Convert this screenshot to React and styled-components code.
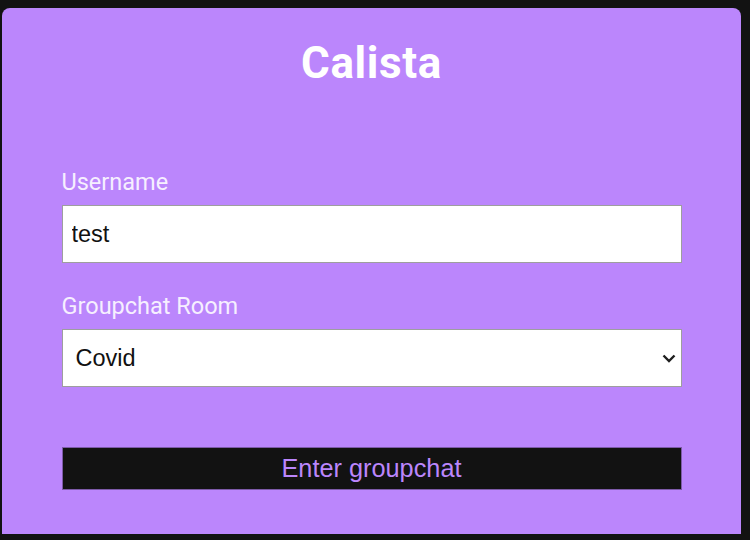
import * as React from "react";
import { useState } from "react";
import styled, { createGlobalStyle } from "styled-components";

const rooms = ["Covid", "JavaScript", "Python", "Gaming"];

const App = () => {
  const [username, setUsername] = useState("test");
  const [room, setRoom] = useState("Covid");

  return (
    <>
      <GlobalStyle />
      <Card>
        <Title>Calista</Title>
        <Form onSubmit={(e) => e.preventDefault()}>
          <Field>
            <Label htmlFor="username">Username</Label>
            <Input
              id="username"
              value={username}
              onChange={(e) => setUsername(e.target.value)}
            />
          </Field>
          <Field>
            <Label htmlFor="room">Groupchat Room</Label>
            <SelectWrap>
              <Select
                id="room"
                value={room}
                onChange={(e) => setRoom(e.target.value)}
              >
                {rooms.map((r) => (
                  <option key={r} value={r}>
                    {r}
                  </option>
                ))}
              </Select>
              <Chevron width="14" height="9" viewBox="0 0 14 9">
                <path
                  d="M1.5 1.5 L7 7 L12.5 1.5"
                  fill="none"
                  stroke="#1f1f1f"
                  strokeWidth="2.4"
                />
              </Chevron>
            </SelectWrap>
          </Field>
          <Button type="submit">Enter groupchat</Button>
        </Form>
      </Card>
    </>
  );
};

const GlobalStyle = createGlobalStyle`
  html, body {
    margin: 0;
    padding: 0;
    background: #121212;
    height: 540px;
    overflow: hidden;
  }
`;

const Card = styled.div`
  margin: 8px 9px 0 2px;
  height: 526px;
  box-sizing: border-box;
  background: #bb86fc;
  border-radius: 8px 8px 0 0;
  padding-top: 31px;
  display: flex;
  flex-direction: column;
  align-items: center;
`;

const Title = styled.h1`
  margin: 0;
  font-family: Roboto, "Liberation Sans", sans-serif;
  font-weight: 700;
  font-size: 44px;
  letter-spacing: 0.6px;
  line-height: 48px;
  color: #ffffff;
`;

const Form = styled.form`
  width: 620px;
  margin-top: 83px;
  display: flex;
  flex-direction: column;
`;

const Field = styled.div`
  display: flex;
  flex-direction: column;
  margin-bottom: 31px;
`;

const Label = styled.label`
  font-family: Roboto, "Liberation Sans", sans-serif;
  font-size: 23.5px;
  line-height: 25px;
  color: #f6efff;
  margin-bottom: 10px;
`;

const Input = styled.input`
  box-sizing: border-box;
  height: 58px;
  width: 100%;
  padding: 0 9px;
  border: 1px solid #9e9e9e;
  border-radius: 0;
  background: #ffffff;
  font-family: "Liberation Sans", Arial, sans-serif;
  font-size: 23.5px;
  color: #111111;
  outline: none;
`;

const SelectWrap = styled.div`
  position: relative;
`;

const Select = styled.select`
  appearance: none;
  box-sizing: border-box;
  height: 58px;
  width: 100%;
  padding: 0 40px 0 13px;
  border: 1px solid #9e9e9e;
  border-radius: 0;
  background: #ffffff;
  font-family: "Liberation Sans", Arial, sans-serif;
  font-size: 23.5px;
  color: #111111;
  outline: none;
`;

const Chevron = styled.svg`
  position: absolute;
  right: 6px;
  top: 25px;
  pointer-events: none;
`;

const Button = styled.button`
  margin-top: 29px;
  height: 43px;
  width: 100%;
  border: 1px solid #7d5aa8;
  background: #121212;
  color: #bb86fc;
  font-family: "Liberation Sans", Arial, sans-serif;
  font-size: 25.3px;
  cursor: pointer;
`;

export default App;
